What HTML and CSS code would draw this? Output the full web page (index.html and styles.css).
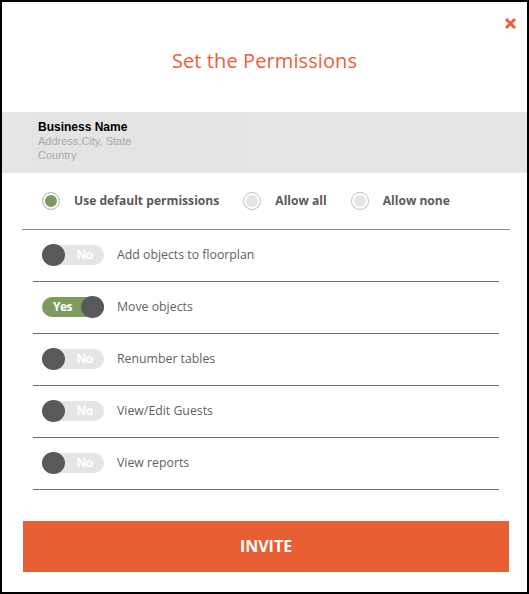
FILE: index.html
```html
<!DOCTYPE html>
<html>
<head>
<meta charset="utf-8">
<link rel="stylesheet" href="styles.css">
</head>
<body>
<div class="modal">
  <header class="head">
    <button class="close" aria-label="Close">
      <svg width="13" height="13" viewBox="0 0 13 13"><path d="M2 2 L11 11 M11 2 L2 11" stroke="#e8603a" stroke-width="3" stroke-linecap="butt"/></svg>
    </button>
    <h1 class="title">Set the Permissions</h1>
  </header>
  <section class="biz">
    <div class="biz-card">
      <div class="biz-name">Business Name</div>
      <div class="biz-addr">Address,City, State</div>
      <div class="biz-addr">Country</div>
    </div>
  </section>
  <div class="radios">
    <label class="radio"><span class="dot on"></span>Use default permissions</label>
    <label class="radio"><span class="dot"></span>Allow all</label>
    <label class="radio"><span class="dot"></span>Allow none</label>
  </div>
  <ul class="perms">
    <li class="perm"><span class="toggle"><span class="knob"></span><span class="tt">No</span></span>Add objects to floorplan</li>
    <li class="perm"><span class="toggle yes"><span class="tt">Yes</span><span class="knob"></span></span>Move objects</li>
    <li class="perm"><span class="toggle"><span class="knob"></span><span class="tt">No</span></span>Renumber tables</li>
    <li class="perm"><span class="toggle"><span class="knob"></span><span class="tt">No</span></span>View/Edit Guests</li>
    <li class="perm"><span class="toggle"><span class="knob"></span><span class="tt">No</span></span>View reports</li>
  </ul>
  <button class="invite">INVITE</button>
</div>
</body>
</html>
```
FILE: styles.css
```css
* { box-sizing: border-box; }
html, body { margin: 0; padding: 0; }
body {
  width: 529px;
  height: 594px;
  border: 2px solid #000;
  background: #fff;
  font-family: "Open Sans", "Liberation Sans", sans-serif;
  overflow: hidden;
}
.modal { display: flex; flex-direction: column; }
.head {
  position: relative;
  height: 110px;
  display: flex;
  align-items: flex-start;
  justify-content: center;
}
.close {
  position: absolute;
  top: 15px;
  right: 10px;
  border: 0;
  background: none;
  padding: 0;
  width: 13px;
  height: 13px;
  display: block;
}
.close svg { display: block; }
.title {
  margin: 44px 0 0;
  font-size: 20px;
  font-weight: 400;
  line-height: 30px;
  color: #e8603a;
  letter-spacing: 0.1px;
}
.biz {
  height: 61px;
  background: #e4e5e7;
  padding-left: 30px;
}
.biz-card {
  width: 212px;
  height: 61px;
  background: #e4e4e5;
  padding: 8px 0 0 6px;
  font-family: "Liberation Sans", Arial, sans-serif;
}
.biz-name {
  font-size: 12px;
  font-weight: 700;
  color: #000;
  line-height: 14px;
}
.biz-addr {
  font-size: 11px;
  color: #a9a9a9;
  line-height: 14px;
}
.radios {
  margin: 0 17px 0 20px;
  height: 57px;
  border-bottom: 1px solid #8a8a8a;
  display: flex;
  align-items: center;
  padding-left: 20px;
  padding-bottom: 1px;
}
.radio {
  display: flex;
  align-items: center;
  font-size: 12.1px;
  font-weight: 700;
  color: #5a5a5a;
  margin-right: 24px;
}
.dot {
  width: 18px;
  height: 18px;
  border-radius: 50%;
  border: 1px solid #c4c4c4;
  background: #e4e5e7;
  box-shadow: inset 0 0 0 2px #fff;
  margin-right: 14px;
}
.dot.on { background: #7b9c5c; }
.perms {
  list-style: none;
  margin: 0 28px 0 31px;
  padding: 0;
}
.perm {
  height: 52px;
  border-bottom: 1px solid #6f6f6f;
  display: flex;
  align-items: center;
  padding-left: 9px;
  padding-bottom: 2px;
  font-size: 12.3px;
  color: #5f5f5f;
}
.toggle {
  width: 62px;
  height: 20px;
  border-radius: 10px;
  background: #e5e5e6;
  display: flex;
  align-items: center;
  margin-right: 13px;
  position: relative;
}
.toggle .knob {
  width: 23px;
  height: 22px;
  border-radius: 50%;
  background: #58595b;
  flex: none;
}
.toggle .tt {
  flex: 1;
  text-align: center;
  color: #fff;
  font-weight: 700;
  font-size: 12px;
  letter-spacing: -0.5px;
}
.toggle.yes { background: #7b9c5c; }
.toggle.yes .tt { padding-left: 2px; }
.invite {
  margin: 31px 18px 0 21px;
  height: 51px;
  border: 0;
  background: #e85f35;
  color: #fff;
  font-family: "Open Sans", "Liberation Sans", sans-serif;
  font-weight: 700;
  font-size: 16px;
  padding: 0 0 2px;
}
```
